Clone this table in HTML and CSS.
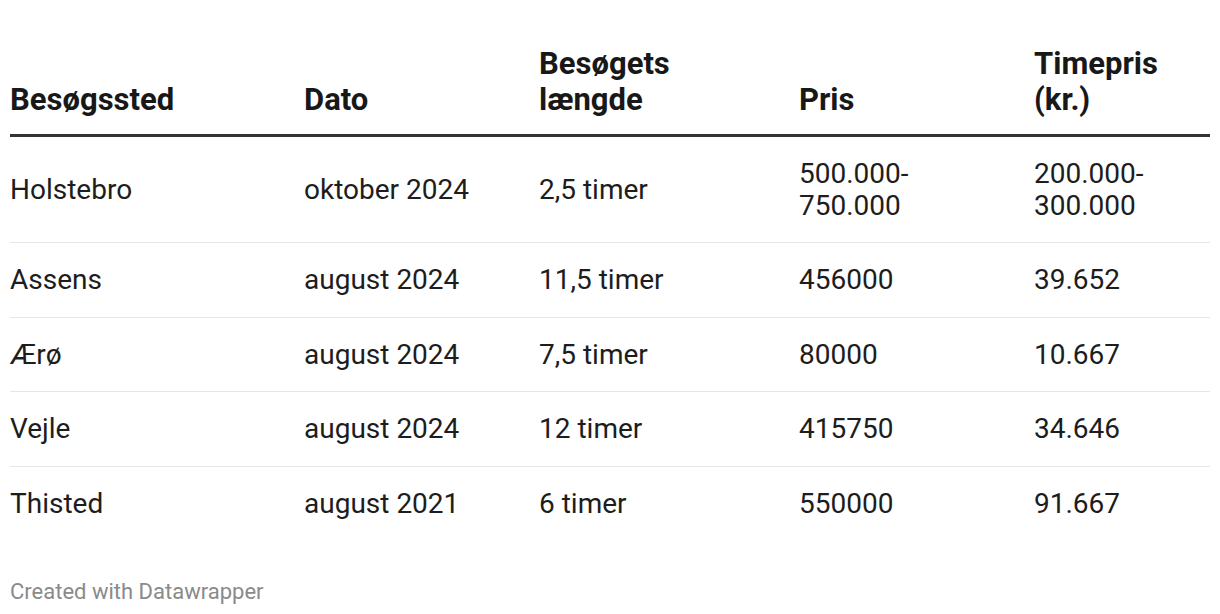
FILE: index.html
```html
<!DOCTYPE html>
<html lang="da">
<head>
<meta charset="utf-8">
<link rel="stylesheet" href="styles.css">
</head>
<body>
<div class="chart">
  <table class="dw-table">
    <colgroup>
      <col class="c1"><col class="c2"><col class="c3"><col class="c4"><col class="c5">
    </colgroup>
    <thead>
      <tr>
        <th>Besøgssted</th>
        <th>Dato</th>
        <th>Besøgets<br>længde</th>
        <th>Pris</th>
        <th>Timepris<br>(kr.)</th>
      </tr>
    </thead>
    <tbody>
      <tr><td>Holstebro</td><td>oktober 2024</td><td>2,5 timer</td><td>500.000-<br>750.000</td><td>200.000-<br>300.000</td></tr>
      <tr><td>Assens</td><td>august 2024</td><td>11,5 timer</td><td>456000</td><td>39.652</td></tr>
      <tr><td>Ærø</td><td>august 2024</td><td>7,5 timer</td><td>80000</td><td>10.667</td></tr>
      <tr><td>Vejle</td><td>august 2024</td><td>12 timer</td><td>415750</td><td>34.646</td></tr>
      <tr><td>Thisted</td><td>august 2021</td><td>6 timer</td><td>550000</td><td>91.667</td></tr>
    </tbody>
  </table>
  <div class="footer">Created with Datawrapper</div>
</div>
</body>
</html>
```
FILE: styles.css
```css
html, body {
  margin: 0;
  padding: 0;
  background: #ffffff;
}
body {
  font-family: Roboto, "Liberation Sans", sans-serif;
  color: #1d1d1d;
}
.chart {
  padding: 46px 10px 0 10px;
}
.dw-table {
  width: 1200px;
  border-collapse: collapse;
  table-layout: fixed;
}
.c1 { width: 294px; }
.c2 { width: 235px; }
.c3 { width: 260px; }
.c4 { width: 235px; }
.c5 { width: 176px; }
th {
  text-align: left;
  vertical-align: bottom;
  font-weight: 700;
  font-size: 31px;
  line-height: 36px;
  padding: 0 0 16px 0;
  border-bottom: 3px solid #333333;
  color: #181818;
}
td {
  font-size: 28px;
  line-height: 31.5px;
  padding: 21px 0 21px 0;
  border-bottom: 1px solid #e6e6e6;
  vertical-align: middle;
}
tbody tr:last-child td {
  border-bottom: none;
}
.footer {
  margin-top: 39px;
  font-size: 22px;
  line-height: 26px;
  color: #8a8a8a;
}
```
